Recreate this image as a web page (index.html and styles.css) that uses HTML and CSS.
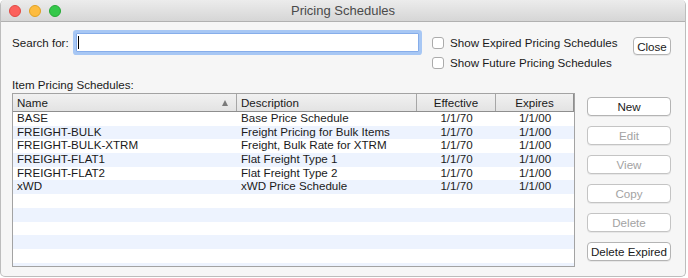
FILE: index.html
```html
<!DOCTYPE html>
<html lang="en">
<head>
    <meta charset="UTF-8">
    <meta name="viewport" content="width=device-width, initial-scale=1.0">
    <title>Pricing Schedules</title>
    <link rel="stylesheet" href="styles.css">
</head>
<body>
    <div class="window">
        <div class="titlebar">
            <div class="lights">
                <span class="light red"></span>
                <span class="light yellow"></span>
                <span class="light green"></span>
            </div>
            <div class="title">Pricing Schedules</div>
            <div></div>
        </div>

        <div class="content">
            <div class="top-row">
                <div class="search-label">Search for:</div>
                <div class="search-field"><span class="caret"></span></div>
                <div class="options">
                    <div class="check"><span class="box"></span>Show Expired Pricing Schedules</div>
                    <div class="check"><span class="box"></span>Show Future Pricing Schedules</div>
                </div>
                <button class="btn close">Close</button>
            </div>

            <div class="list-label">Item Pricing Schedules:</div>

            <div class="main">
                <div class="table">
                    <div class="thead">
                        <div class="th name">Name <span class="sort"></span></div>
                        <div class="th">Description</div>
                        <div class="th center">Effective</div>
                        <div class="th center last">Expires</div>
                    </div>
                    <div class="tbody">
                        <div class="tr">
                            <div class="td">BASE</div>
                            <div class="td">Base Price Schedule</div>
                            <div class="td center">1/1/70</div>
                            <div class="td center">1/1/00</div>
                        </div>
                        <div class="tr">
                            <div class="td">FREIGHT-BULK</div>
                            <div class="td">Freight Pricing for Bulk Items</div>
                            <div class="td center">1/1/70</div>
                            <div class="td center">1/1/00</div>
                        </div>
                        <div class="tr">
                            <div class="td">FREIGHT-BULK-XTRM</div>
                            <div class="td">Freight, Bulk Rate for XTRM</div>
                            <div class="td center">1/1/70</div>
                            <div class="td center">1/1/00</div>
                        </div>
                        <div class="tr">
                            <div class="td">FREIGHT-FLAT1</div>
                            <div class="td">Flat Freight Type 1</div>
                            <div class="td center">1/1/70</div>
                            <div class="td center">1/1/00</div>
                        </div>
                        <div class="tr">
                            <div class="td">FREIGHT-FLAT2</div>
                            <div class="td">Flat Freight Type 2</div>
                            <div class="td center">1/1/70</div>
                            <div class="td center">1/1/00</div>
                        </div>
                        <div class="tr">
                            <div class="td">xWD</div>
                            <div class="td">xWD Price Schedule</div>
                            <div class="td center">1/1/70</div>
                            <div class="td center">1/1/00</div>
                        </div>
                    </div>
                </div>

                <div class="actions">
                    <button class="btn">New</button>
                    <button class="btn disabled">Edit</button>
                    <button class="btn disabled">View</button>
                    <button class="btn disabled">Copy</button>
                    <button class="btn disabled">Delete</button>
                    <button class="btn">Delete Expired</button>
                </div>
            </div>
        </div>
    </div>
</body>
</html>
```

FILE: styles.css
```css
:root {
    --window-bg: #f6f6f6;
    --text-color: #1a1a1a;
    --muted-color: #a3a3a3;
    --border-color: #b4b4b4;
    --stripe-color: #edf3fe;
    --row-height: 13.7px;
}

* {
    margin: 0;
    padding: 0;
    box-sizing: border-box;
    font-family: 'Liberation Sans', Arial, Helvetica, sans-serif;
}

body {
    background-color: #ffffff;
    color: var(--text-color);
    font-size: 11.6px;
}

.window {
    width: 686px;
    height: 277px;
    background-color: var(--window-bg);
    border: 1px solid #bdbdbd;
    border-top: none;
    border-radius: 5px;
    overflow: hidden;
}

/* Title bar */
.titlebar {
    height: 22px;
    display: grid;
    grid-template-columns: 1fr auto 1fr;
    align-items: center;
    background: linear-gradient(#ececec, #d6d6d6);
    border-bottom: 1px solid #b1b1b1;
}

.lights {
    display: flex;
    gap: 8px;
    padding-left: 8px;
}

.light {
    width: 12px;
    height: 12px;
    border-radius: 50%;
}

.red {
    background-color: #fc605c;
    border: 1px solid #df4944;
}

.yellow {
    background-color: #fdbc40;
    border: 1px solid #dfa123;
}

.green {
    background-color: #34c84a;
    border: 1px solid #25a936;
}

.title {
    font-size: 13px;
    color: #4a4a4a;
}

/* Content */
.content {
    padding: 0 14px 0 11px;
}

.top-row {
    display: flex;
    align-items: flex-start;
    padding-top: 11px;
}

.search-label {
    width: 64px;
    height: 19px;
    line-height: 19px;
}

.search-field {
    width: 343px;
    height: 19px;
    background-color: #ffffff;
    border: 1px solid #86adea;
    box-shadow: 0 0 0 3px #a7c7f4;
    border-radius: 1px;
    padding: 2px 0 0 1px;
}

.caret {
    display: block;
    width: 1px;
    height: 13px;
    background-color: #000000;
}

.options {
    margin-left: 13px;
    display: flex;
    flex-direction: column;
    gap: 1px;
}

.check {
    display: flex;
    align-items: center;
    height: 19px;
}

.box {
    width: 12px;
    height: 12px;
    background-color: #ffffff;
    border: 1px solid #ababab;
    border-radius: 3px;
    margin-right: 6px;
}

.btn {
    height: 19px;
    background-color: #ffffff;
    border: 1px solid var(--border-color);
    border-radius: 4px;
    box-shadow: 0 1px 0 rgba(0, 0, 0, 0.06);
    font-size: 11.6px;
    color: var(--text-color);
    text-align: center;
}

.btn.disabled {
    color: var(--muted-color);
    border-color: #c4c4c4;
}

.close {
    width: 38px;
    height: 18px;
    margin-left: auto;
    margin-top: 4px;
}

.list-label {
    margin-top: 6px;
    height: 14px;
    line-height: 14px;
}

/* Table */
.main {
    display: flex;
    align-items: flex-start;
    margin-top: 1px;
}

.table {
    width: 563px;
    height: 174px;
    border: 1px solid #a3a3a3;
    background-color: #ffffff;
    overflow: hidden;
}

.thead,
.tr {
    display: grid;
    grid-template-columns: 224px 180px 79px 78px;
}

.thead {
    height: 18px;
    background: linear-gradient(#f1f1f1, #e3e3e3);
    border-bottom: 1px solid #8e8e8e;
}

.th {
    display: flex;
    align-items: center;
    padding-left: 4px;
    border-right: 1px solid #a6a6a6;
    line-height: 17px;
}

.th.last {
    border-right: 1px solid #8e8e8e;
}

.center {
    justify-content: center;
    text-align: center;
    padding-left: 0;
}

.th.name {
    justify-content: space-between;
    padding-right: 8px;
}

.sort {
    width: 0;
    height: 0;
    border-left: 3.5px solid transparent;
    border-right: 3.5px solid transparent;
    border-bottom: 6px solid #7a7a7a;
}

.tbody {
    height: 154px;
    background: repeating-linear-gradient(
        #ffffff 0,
        #ffffff var(--row-height),
        var(--stripe-color) var(--row-height),
        var(--stripe-color) calc(var(--row-height) * 2)
    );
}

.tr {
    height: var(--row-height);
    line-height: 12px;
}

.td {
    padding-left: 4px;
    white-space: nowrap;
    overflow: hidden;
}

.td.center {
    padding-left: 0;
}

/* Side buttons */
.actions {
    width: 84px;
    margin-left: 12px;
    padding-top: 4px;
    display: flex;
    flex-direction: column;
    gap: 10px;
}
```
